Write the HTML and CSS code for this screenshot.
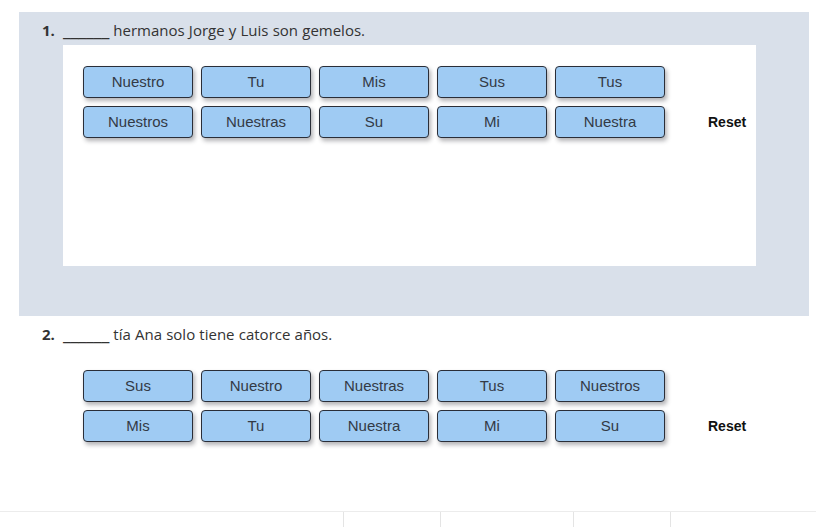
FILE: index.html
```html
<!DOCTYPE html>
<html>
<head>
<meta charset="utf-8">
<link rel="stylesheet" href="styles.css">
</head>
<body>
<div class="question q-active">
  <div class="prompt"><span class="num">1.</span><span class="blank">______</span> hermanos Jorge y Luis son gemelos.</div>
  <div class="dropzone">
    <div class="choices">
      <button class="chip">Nuestro</button>
      <button class="chip">Tu</button>
      <button class="chip">Mis</button>
      <button class="chip">Sus</button>
      <button class="chip">Tus</button>
      <span class="spacer"></span>
      <button class="chip">Nuestros</button>
      <button class="chip">Nuestras</button>
      <button class="chip">Su</button>
      <button class="chip">Mi</button>
      <button class="chip">Nuestra</button>
      <span class="reset">Reset</span>
    </div>
  </div>
</div>
<div class="question">
  <div class="prompt"><span class="num">2.</span><span class="blank">______</span> tía Ana solo tiene catorce años.</div>
  <div class="dropzone plain">
    <div class="choices">
      <button class="chip">Sus</button>
      <button class="chip">Nuestro</button>
      <button class="chip">Nuestras</button>
      <button class="chip">Tus</button>
      <button class="chip">Nuestros</button>
      <span class="spacer"></span>
      <button class="chip">Mis</button>
      <button class="chip">Tu</button>
      <button class="chip">Nuestra</button>
      <button class="chip">Mi</button>
      <button class="chip">Su</button>
      <span class="reset">Reset</span>
    </div>
  </div>
</div>
<div class="footer">
  <div class="cell c1"></div>
  <div class="cell c2"></div>
  <div class="cell c3"></div>
  <div class="cell c4"></div>
  <div class="cell c5"></div>
</div>
</body>
</html>
```
FILE: styles.css
```css
html, body {
  margin: 0;
  padding: 0;
  background: #ffffff;
}
body {
  width: 816px;
  height: 528px;
  padding-top: 12px;
  box-sizing: border-box;
  overflow: hidden;
  font-family: "Open Sans", "Liberation Sans", sans-serif;
  color: #333333;
}
.question {
  margin-left: 19px;
  width: 790px;
  height: 304px;
  padding-top: 8px;
  box-sizing: border-box;
}
.question + .question {
  height: 195px;
}
.q-active {
  background: #d9e0ea;
}
.prompt {
  height: 20px;
  line-height: 18px;
  font-size: 15px;
  padding-left: 23px;
  white-space: nowrap;
  word-spacing: 0.3px;
}
.num {
  font-weight: 700;
  display: inline-block;
  width: 21px;
}
.blank {
  font-size: 18px;
  line-height: 1;
  letter-spacing: -0.2px;
}
.dropzone {
  margin-top: 5px;
  margin-left: 44px;
  width: 693px;
  height: 221px;
  background: #ffffff;
  padding: 21px 20px;
  box-sizing: border-box;
}
.choices {
  display: grid;
  grid-template-columns: repeat(5, 110px) 1fr;
  grid-auto-rows: 32px;
  column-gap: 8px;
  row-gap: 8px;
  align-items: center;
}
.chip {
  width: 110px;
  height: 32px;
  box-sizing: border-box;
  background: #9fcbf3;
  border: 1px solid #2a2e38;
  border-radius: 4px;
  box-shadow: 2px 3px 4px rgba(40, 40, 50, 0.35);
  font-family: "Liberation Sans", Arial, sans-serif;
  font-size: 15px;
  color: #333a45;
  padding: 0 0 2px 0;
  text-align: center;
}
.reset {
  font-family: "Liberation Sans", Arial, sans-serif;
  font-weight: 700;
  font-size: 14px;
  color: #111111;
  margin-left: 35px;
}
.footer {
  display: flex;
  border-top: 1px solid #ececec;
  height: 15px;
}
.cell {
  height: 100%;
}
.c1 { width: 343px; }
.c2 { width: 96px; border-left: 1px solid #e4e4e4; }
.c3 { width: 132px; border-left: 1px solid #e4e4e4; }
.c4 { width: 96px; border-left: 1px solid #e4e4e4; }
.c5 { flex: 1; border-left: 1px solid #e4e4e4; }
```
